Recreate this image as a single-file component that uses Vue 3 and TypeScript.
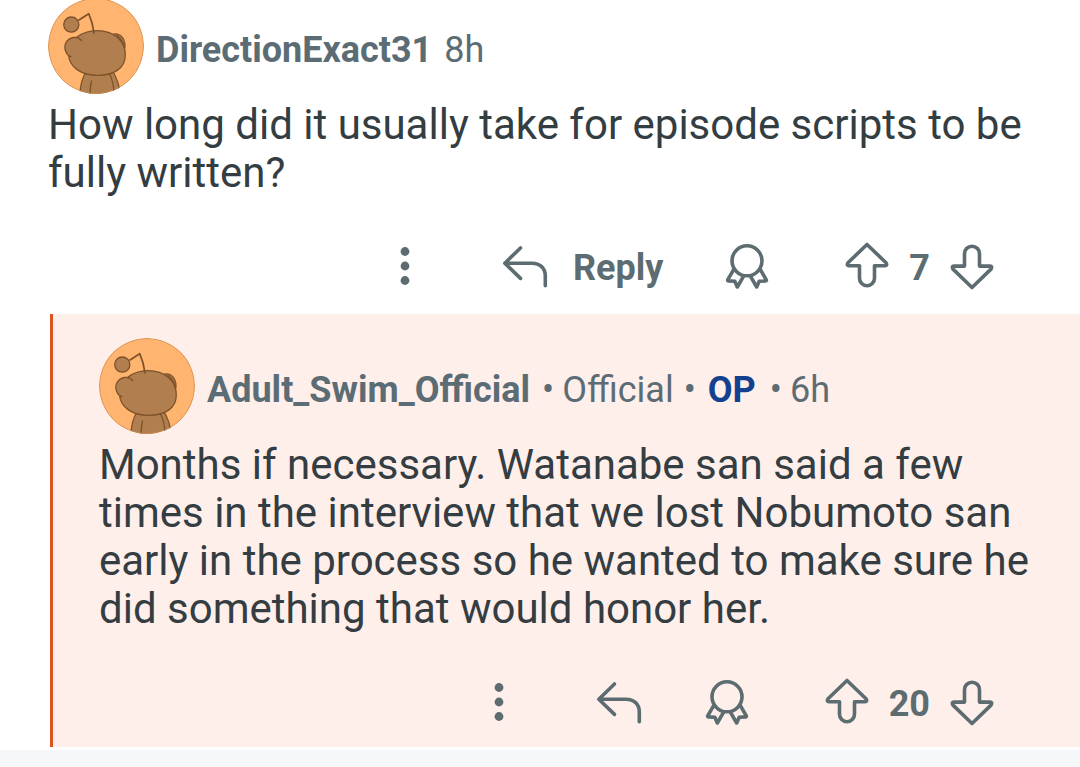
<script setup lang="ts">
interface Comment {
  id: string
  author: string
  tag?: string
  op?: boolean
  age: string
  body: string
  score: number
  replyLabel: boolean
  nested: boolean
}

const comments: Comment[] = [
  {
    id: 'c1',
    author: 'DirectionExact31',
    age: '8h',
    body: 'How long did it usually take for episode scripts to be fully written?',
    score: 7,
    replyLabel: true,
    nested: false,
  },
  {
    id: 'c2',
    author: 'Adult_Swim_Official',
    tag: 'Official',
    op: true,
    age: '6h',
    body: 'Months if necessary. Watanabe san said a few times in the interview that we lost Nobumoto san early in the process so he wanted to make sure he did something that would honor her.',
    score: 20,
    replyLabel: false,
    nested: true,
  },
]
</script>

<template>
  <main class="thread">
    <article v-for="c in comments" :key="c.id" class="comment" :class="{ nested: c.nested }">
      <header class="head">
        <svg class="avatar" viewBox="0 0 96 96" aria-hidden="true">
          <defs>
            <clipPath :id="'clip-' + c.id"><circle cx="48" cy="48" r="48" /></clipPath>
          </defs>
          <g :clip-path="'url(#clip-' + c.id + ')'">
            <circle cx="48" cy="48" r="48" fill="#ffb470" />
            <g fill="#b17e4f" stroke="#7d5229" stroke-width="1.3" stroke-linecap="round" stroke-linejoin="round">
              <path d="M38 74C34 80 32 88 32 98H72C72 88 69 80 64 72Z" />
              <path d="M43.500 83C42.500 87 42 92 42 97M61 75C65 82 66 88 66 97" fill="none" />
              <path d="M64 37C67 35 72 36 74 39C77 42 78 48 76 53L68 47Z" />
              <path d="M49 32.600C66 32.600 77.300 43 77.300 57C77.300 71 65 77.300 50 77.300C34 77.300 21 70 20.500 56C20.500 42 34 32.600 49 32.600Z" />
              <path d="M69 37.500C73 40.500 75.500 45 76.500 50" fill="none" />
              <path d="M33.500 43C31 39 22 39 18.800 44C15.500 49 17 56 21.500 58.500L30 56Z" stroke="none" />
              <path d="M33.500 42.500C31 39.500 28 39 25.500 39.500C18 41 15 48 18 54C19 56.500 20.500 58 22.800 58.500" fill="none" />
              <path d="M31 22L40.700 15.700C43.500 22 45 27 46 35" fill="none" stroke-width="1.700" />
              <circle cx="23.300" cy="26.600" r="7.600" />
            </g>
            <circle cx="48" cy="48" r="47.500" fill="none" stroke="#c98a50" stroke-width="0.700" />
          </g>
        </svg>
        <div class="meta">
          <strong class="author">{{ c.author }}</strong>
          <template v-if="c.tag">
            <span class="dot">•</span>
            <span>{{ c.tag }}</span>
          </template>
          <template v-if="c.op">
            <span class="dot">•</span>
            <strong class="op">OP</strong>
            <span class="dot">•</span>
          </template>
          <time>{{ c.age }}</time>
        </div>
      </header>

      <p class="body">{{ c.body }}</p>

      <div class="actions">
        <button type="button" aria-label="More options">
          <svg class="icon filled" viewBox="0 0 48 48">
            <circle cx="24" cy="9.500" r="4.400" />
            <circle cx="24" cy="24" r="4.400" />
            <circle cx="24" cy="38.500" r="4.400" />
          </svg>
        </button>
        <button type="button" class="reply" aria-label="Reply">
          <svg class="icon" viewBox="0 0 48 48">
            <path d="M19.500 6L3.800 21.200L19.500 36.400M3.800 21.200H31C39 21.200 44.300 26 44.300 34V43.700" />
          </svg>
          <span v-if="c.replyLabel" class="label">Reply</span>
        </button>
        <button type="button" class="award" aria-label="Give award">
          <svg class="icon" viewBox="0 0 48 48">
            <circle cx="24" cy="18.800" r="15" />
            <path d="M10.500 27.800L4.700 37.900Q4.400 38.800 5.300 38.900L11.800 39.300L14.300 45L20.500 34.300" />
            <path d="M37.500 27.800L43.300 37.900Q43.600 38.800 42.700 38.900L36.200 39.300L33.700 45L27.500 34.300" />
          </svg>
        </button>
        <div class="votes">
          <button type="button" aria-label="Upvote">
            <svg class="icon" viewBox="0 0 48 48">
              <path d="M24 2.500L5 20.700Q3.300 23.700 6 23.700H16.500V36.200A7.500 7.500 0 0 0 31.500 36.200V23.700H42Q44.700 23.700 43 20.700Z" />
            </svg>
          </button>
          <span class="score label">{{ c.score }}</span>
          <button type="button" aria-label="Downvote">
            <svg class="icon" viewBox="0 0 48 48">
              <path d="M24 45.500L5 27.100Q3.300 24.100 6 24.100H16.500V11.700A7.500 7.500 0 0 1 31.500 11.700V24.100H42Q44.700 24.100 43 27.100Z" />
            </svg>
          </button>
        </div>
      </div>
    </article>
    <div class="divider"></div>
  </main>
</template>

<style>
body {
  margin: 0;
  background: #ffffff;
  overflow: hidden;
}
</style>

<style scoped>
.thread {
  display: flow-root;
  font-family: Roboto, "Noto Sans", sans-serif;
  color: #333d42;
}
.comment {
  margin-top: -2px;
  padding: 0 48px 24px;
}
.comment.nested {
  margin: 0 0 0 50px;
  padding: 24px 48px 21px 46px;
  border-left: 3px solid #d9541e;
  background: #ffefeb;
}
.head {
  display: flex;
  align-items: center;
  gap: 12px;
}
.avatar {
  width: 96px;
  height: 96px;
  flex: none;
}
.meta {
  display: flex;
  align-items: baseline;
  padding-top: 8px;
  font-size: 36px;
  line-height: 44px;
  color: #5c6c74;
  white-space: nowrap;
}
.author {
  margin-right: 2px;
  font-weight: 700;
}
.author + time {
  margin-left: 10px;
}
.dot {
  margin: 0 8px 0 10px;
  font-size: 36px;
}
.op {
  margin: 0 4px;
  font-weight: 700;
  color: #14418f;
}
.body {
  margin: 7px 0 45px;
  font-size: 42px;
  line-height: 48px;
}
.actions {
  display: flex;
  justify-content: flex-end;
  align-items: center;
  padding-right: 36px;
  color: #5c6c70;
}
button {
  display: flex;
  align-items: center;
  padding: 0;
  border: 0;
  background: none;
  font: 700 36px/44px Roboto, "Noto Sans", sans-serif;
  color: inherit;
  cursor: pointer;
}
.reply {
  gap: 24px;
  margin-left: 72px;
}
.award {
  margin-left: 60px;
}
.votes {
  display: flex;
  align-items: center;
  margin-left: 72px;
}
.label {
  padding-top: 4px;
  font-size: 36px;
  line-height: 44px;
  font-weight: 700;
}
.score {
  margin: 0 18px;
}
.icon {
  display: block;
  width: 48px;
  height: 48px;
  fill: none;
  stroke: currentColor;
  stroke-width: 3.6;
  stroke-linecap: round;
  stroke-linejoin: round;
}
.icon.filled {
  fill: currentColor;
  stroke: none;
}
.divider {
  height: 24px;
  border-top: 3px solid #ffffff;
  background: #f6f7f9;
}
</style>
